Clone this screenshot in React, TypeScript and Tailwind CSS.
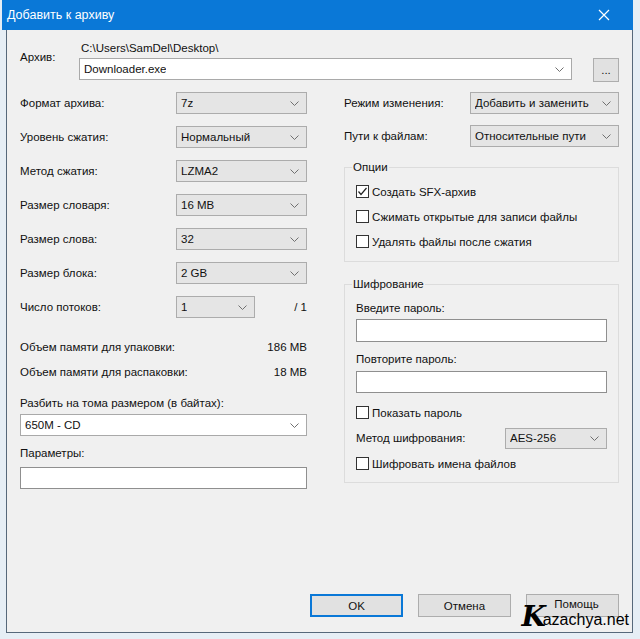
import React from 'react';

function Chevron() {
  return (
    <svg width="9" height="5" viewBox="0 0 9 5" className="shrink-0">
      <polyline points="0.5,0.5 4.5,4.5 8.5,0.5" fill="none" stroke="#707070" strokeWidth="1" />
    </svg>
  );
}

function Select({ value, className = '', white = false }: { value: string; className?: string; white?: boolean }) {
  return (
    <div
      className={`flex items-center justify-between pl-[4px] pr-[7px] border ${
        white ? 'bg-white border-[#a9a9a9]' : 'bg-[#e5e5e5] border-[#acacac]'
      } ${className}`}
    >
      <span className="truncate">{value}</span>
      <Chevron />
    </div>
  );
}

function Checkbox({ label, checked = false }: { label: string; checked?: boolean }) {
  return (
    <div className="flex items-center h-[25px]">
      <div className="w-[13px] h-[13px] border border-[#333] bg-white flex items-center justify-center">
        {checked && (
          <svg width="11" height="11" viewBox="0 0 11 11">
            <polyline points="1.5,5.5 4,8.5 9.5,2" fill="none" stroke="#222" strokeWidth="1.2" />
          </svg>
        )}
      </div>
      <span className="ml-[3px]">{label}</span>
    </div>
  );
}

function Group({ title, className = '', children }: { title: string; className?: string; children: React.ReactNode }) {
  return (
    <div className={`relative border border-[#dcdcdc] ${className}`}>
      <span className="absolute left-[7px] -top-[8px] px-px bg-[#f0f0f0] leading-[14px]">{title}</span>
      {children}
    </div>
  );
}

const leftRows: { label: string; value: string }[] = [
  { label: 'Формат архива:', value: '7z' },
  { label: 'Уровень сжатия:', value: 'Нормальный' },
  { label: 'Метод сжатия:', value: 'LZMA2' },
  { label: 'Размер словаря:', value: '16 MB' },
  { label: 'Размер слова:', value: '32' },
  { label: 'Размер блока:', value: '2 GB' },
];

export default function App() {
  return (
    <div className="w-[640px] h-[639px] bg-[#e6eef5] font-['Liberation_Sans',Arial,sans-serif] text-[11.5px] leading-[14px] text-[#111] overflow-hidden">
      <div className="ml-[6px] w-[627px] h-[633px] flex flex-col relative">
        {/* title bar */}
        <div className="h-[30px] bg-[#0a78d7] flex items-center justify-between pl-px pr-[23px] text-white -ml-[4px]">
          <span className="text-[12.5px] pl-[4px]">Добавить к архиву</span>
          <svg width="12" height="12" viewBox="0 0 12 12">
            <path d="M1 1 L11 11 M11 1 L1 11" stroke="white" strokeWidth="1.2" />
          </svg>
        </div>

        <div className="flex-1 flex flex-col bg-[#f0f0f0] border-x border-b border-[#56687a] px-[13px] pt-[11px]">
          {/* archive row */}
          <div className="flex">
            <div className="w-[59px] pt-[9px]">Архив:</div>
            <div className="flex-1 flex flex-col">
              <div className="pl-[2px]">C:\Users\SamDel\Desktop\</div>
              <div className="flex items-start mt-[3px]">
                <Select white value="Downloader.exe" className="flex-1 h-[22px]" />
                <div className="ml-[21px] w-[26px] h-[24px] bg-[#e1e1e1] border border-[#adadad] flex items-end justify-center pb-[5px] leading-none">
                  ...
                </div>
              </div>
            </div>
          </div>

          {/* columns */}
          <div className="flex justify-between mt-[4px]">
            {/* left column */}
            <div className="w-[287px] flex flex-col">
              {leftRows.map((r) => (
                <div key={r.label} className="h-[34px] flex items-center">
                  <span className="flex-1">{r.label}</span>
                  <Select value={r.value} className="w-[131px] h-[22px]" />
                </div>
              ))}
              <div className="h-[34px] flex items-center">
                <span className="flex-1">Число потоков:</span>
                <Select value="1" className="w-[79px] h-[22px]" />
                <span className="w-[52px] text-right">/ 1</span>
              </div>
              <div className="mt-[10px] h-[25px] flex items-center justify-between">
                <span>Объем памяти для упаковки:</span>
                <span>186 MB</span>
              </div>
              <div className="h-[25px] flex items-center justify-between">
                <span>Объем памяти для распаковки:</span>
                <span>18 MB</span>
              </div>
              <div className="mt-[12px]">Разбить на тома размером (в байтах):</div>
              <Select white value="650M - CD" className="mt-[4px] h-[22px]" />
              <div className="mt-[10px]">Параметры:</div>
              <div className="mt-[7px] h-[22px] bg-white border border-[#8f8f8f]" />
            </div>

            {/* right column */}
            <div className="w-[275px] flex flex-col">
              <div className="h-[34px] flex items-center">
                <span className="flex-1">Режим изменения:</span>
                <Select value="Добавить и заменить" className="w-[149px] h-[22px]" />
              </div>
              <div className="h-[32px] flex items-center">
                <span className="flex-1">Пути к файлам:</span>
                <Select value="Относительные пути" className="w-[149px] h-[22px]" />
              </div>

              <Group title="Опции" className="mt-[15px] h-[95px] px-[11px] pt-[11px]">
                <Checkbox label="Создать SFX-архив" checked />
                <Checkbox label="Сжимать открытые для записи файлы" />
                <Checkbox label="Удалять файлы после сжатия" />
              </Group>

              <Group title="Шифрование" className="mt-[22px] h-[199px] px-[11px] pt-[16px] flex flex-col">
                <div>Введите пароль:</div>
                <div className="mt-[4px] h-[23px] bg-white border border-[#8f8f8f]" />
                <div className="mt-[10px]">Повторите пароль:</div>
                <div className="mt-[5px] h-[22px] bg-white border border-[#8f8f8f]" />
                <div className="mt-[7px]">
                  <Checkbox label="Показать пароль" />
                </div>
                <div className="h-[26px] flex items-center">
                  <span className="flex-1">Метод шифрования:</span>
                  <Select value="AES-256" className="w-[102px] h-[21px]" />
                </div>
                <Checkbox label="Шифровать имена файлов" />
              </Group>
            </div>
          </div>

          {/* buttons */}
          <div className="mt-auto mb-[15px] flex justify-end gap-[15px]">
            <div className="w-[93px] h-[23px] bg-[#e1e1e1] border-2 border-[#0a78d7] flex items-center justify-center">OK</div>
            <div className="w-[93px] h-[23px] bg-[#e1e1e1] border border-[#adadad] flex items-center justify-center">Отмена</div>
            <div className="w-[93px] h-[23px] bg-[#e1e1e1] border border-[#adadad] flex items-start justify-center pt-[2px] pl-[8px]">Помощь</div>
          </div>
        </div>

        {/* watermark */}
        <div className="absolute right-[4px] bottom-[2px] flex items-end">
          <span className="font-['DejaVu_Serif',serif] italic font-bold text-[28px] leading-[28px] text-black">K</span>
          <span className="text-[16px] leading-[18px] text-black -ml-[3px] mb-[2px]">azachya.net</span>
        </div>
      </div>
    </div>
  );
}
